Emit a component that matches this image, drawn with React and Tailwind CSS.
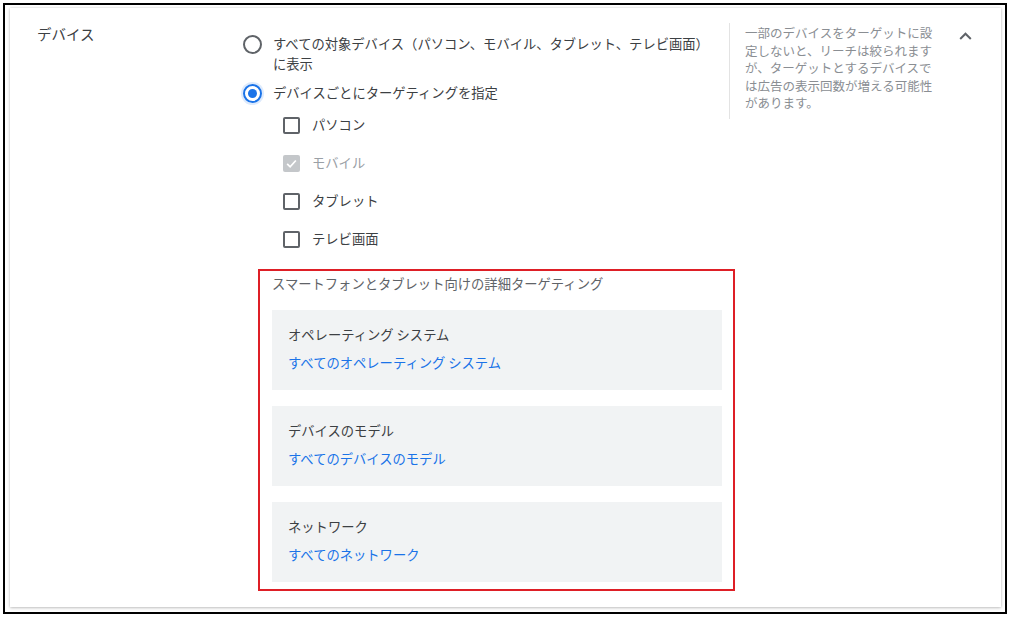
import React from "react";

const font = { fontFamily: '"Noto Sans CJK JP", "Noto Sans", sans-serif' };

function Radio({ checked }) {
  return checked ? (
    <span className="flex h-[19px] w-[19px] shrink-0 items-center justify-center rounded-full border-2 border-[#1a73e8] shadow-[0_0_0_2px_rgba(26,115,232,0.15)]">
      <span className="block h-[9px] w-[9px] rounded-full bg-[#1a73e8]" />
    </span>
  ) : (
    <span className="block h-[19px] w-[19px] shrink-0 rounded-full border-2 border-[#5f6368]" />
  );
}

function Checkbox({ disabledChecked }) {
  if (disabledChecked) {
    return (
      <span className="flex h-[17px] w-[17px] shrink-0 items-center justify-center rounded-[2px] bg-[#c4c7ca]">
        <svg width="13" height="13" viewBox="0 0 24 24">
          <path d="M4 12.5 L9.5 18 L20 6.5" fill="none" stroke="#ffffff" strokeWidth="3.2" />
        </svg>
      </span>
    );
  }
  return <span className="block h-[17px] w-[17px] shrink-0 rounded-[2px] border-2 border-[#5f6368]" />;
}

function CheckRow({ label, disabledChecked, first }) {
  return (
    <div className={`flex h-[20px] items-center ${first ? "mt-[12px]" : "mt-[18px]"} pl-[40px]`}>
      <Checkbox disabledChecked={disabledChecked} />
      <span
        className={`ml-[12px] text-[13.3px] leading-[20px] ${
          disabledChecked ? "text-[#9aa0a6]" : "text-[#3c4043]"
        }`}
      >
        {label}
      </span>
    </div>
  );
}

function Panel({ title, link }) {
  return (
    <div className="h-[80px] bg-[#f1f3f4] px-[16px] pt-[15px]">
      <div className="text-[13.3px] leading-[20px] text-[#3c4043]">{title}</div>
      <div className="mt-[8px] text-[13.3px] leading-[20px] text-[#1a73e8]">{link}</div>
    </div>
  );
}

export default function App() {
  return (
    <div className="h-[621px] w-[1015px] overflow-hidden bg-white pl-[3px] pt-[3px]" style={font}>
      <div className="flex h-[611px] w-[1004px] flex-col border-2 border-black bg-white">
        <div className="ml-[5px] mr-[4px] mt-[3px] mb-[5px] flex flex-1 bg-white pl-[27px] shadow-[0_1px_3px_rgba(0,0,0,0.22),0_0_2px_rgba(0,0,0,0.12)]">
          {/* label column */}
          <div className="w-[206px] shrink-0 pt-[16px]">
            <div className="text-[14.5px] leading-[20px] text-[#3c4043]">デバイス</div>
          </div>

          {/* options column */}
          <div className="w-[485px] shrink-0 pt-[26px]">
            <div className="flex items-start">
              <div className="mt-[1px]">
                <Radio />
              </div>
              <div className="ml-[11px] text-[13.3px] leading-[20px] text-[#3c4043]">
                すべての対象デバイス（パソコン、モバイル、タブレット、テレビ画面）
                <br />
                に表示
              </div>
            </div>
            <div className="mt-[9px] flex h-[20px] items-center">
              <Radio checked />
              <span className="ml-[11px] text-[13.3px] leading-[20px] text-[#3c4043]">
                デバイスごとにターゲティングを指定
              </span>
            </div>

            <CheckRow label="パソコン" first />
            <CheckRow label="モバイル" disabledChecked />
            <CheckRow label="タブレット" />
            <CheckRow label="テレビ画面" />

            <div className="ml-[15px] mt-[20px] w-[477px] border-2 border-[#de1f26] pl-[12px] pr-[11px] pt-[3px] pb-[7px]">
              <div className="text-[13.3px] leading-[20px] text-[#5f6368]">
                スマートフォンとタブレット向けの詳細ターゲティング
              </div>
              <div className="mt-[16px] flex flex-col gap-[16px]">
                <Panel title="オペレーティング システム" link="すべてのオペレーティング システム" />
                <Panel title="デバイスのモデル" link="すべてのデバイスのモデル" />
                <Panel title="ネットワーク" link="すべてのネットワーク" />
              </div>
            </div>
          </div>

          {/* help column */}
          <div className="ml-[1px] mt-[15px] h-[96px] w-[206px] shrink-0 border-l border-[#e3e3e3] pl-[15px] pt-[1px]">
            <div className="whitespace-nowrap text-[12.5px] leading-[17.5px] text-[#8a8e93]">
              <div>一部のデバイスをターゲットに設</div>
              <div>定しないと、リーチは絞られます</div>
              <div>が、ターゲットとするデバイスで</div>
              <div>は広告の表示回数が増える可能性</div>
              <div>があります。</div>
            </div>
          </div>

          {/* chevron */}
          <div className="ml-[24px] pt-[24px]">
            <svg width="13" height="8" viewBox="0 0 13 8">
              <path d="M1.2 7 L6.5 1.7 L11.8 7" fill="none" stroke="#5f6368" strokeWidth="2" />
            </svg>
          </div>
        </div>
      </div>
    </div>
  );
}
